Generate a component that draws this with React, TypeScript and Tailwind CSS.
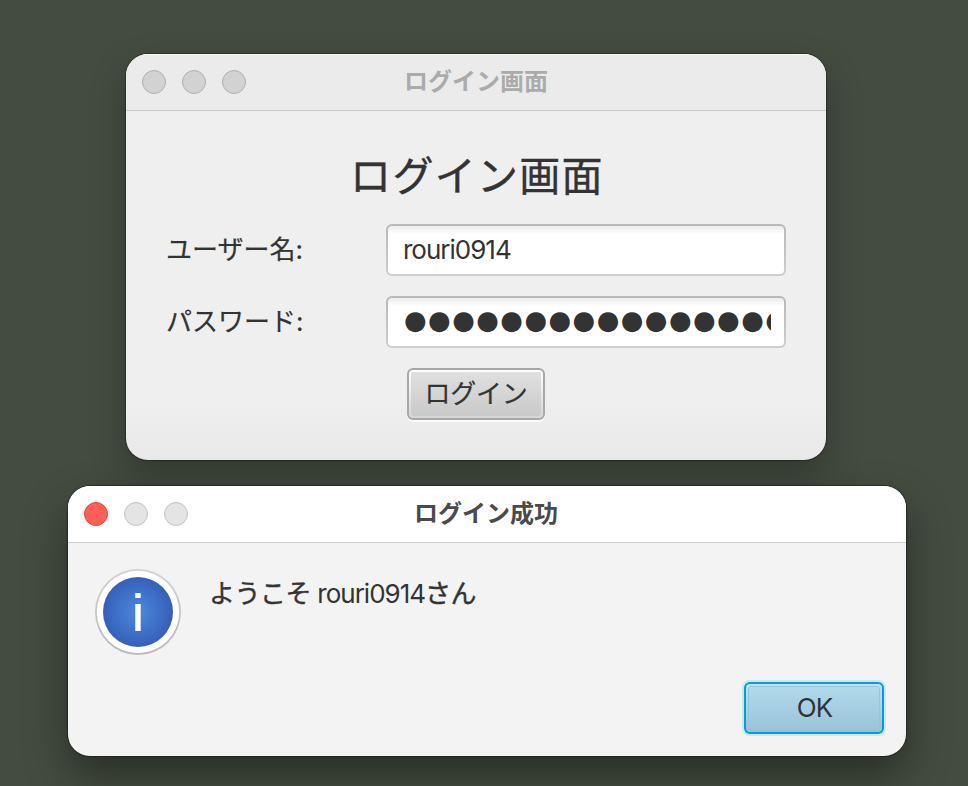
import type { ReactNode } from "react";

const PASSWORD_MASK = "●".repeat(16);

function TrafficLights({ active }: { active: boolean }) {
  const idle = active
    ? "bg-[#e4e4e4] border-[#c2c2c2]"
    : "bg-[#d2d2d2] border-[#b0b0b0]";
  return (
    <div className="flex w-[120px] gap-4 pl-4">
      <span
        className={`size-6 rounded-full border ${active ? "bg-[#ff5f57] border-[#e2463f]" : idle}`}
      />
      <span className={`size-6 rounded-full border ${idle}`} />
      <span className={`size-6 rounded-full border ${idle}`} />
    </div>
  );
}

function TitleBar({ title, active }: { title: string; active: boolean }) {
  return (
    <header
      className={`flex h-[57px] shrink-0 items-center justify-between border-b ${
        active
          ? "border-[#cdcdcd] bg-white pr-[2px] text-[#4a4a4a]"
          : "border-[#c8c8c8] bg-[#ebebeb] text-[#ababab] shadow-[inset_0_1px_0_#f7f7f7]"
      }`}
    >
      <TrafficLights active={active} />
      <h1 className="pb-px text-[24px] leading-8 font-bold">{title}</h1>
      <div className="w-[120px]" />
    </header>
  );
}

function Field({ label, children }: { label: string; children: ReactNode }) {
  return (
    <div className="flex h-[52px] items-center">
      <span className="w-[220px] text-[26px] leading-8 whitespace-nowrap [-webkit-text-stroke:0.2px]">
        {label}
      </span>
      <div className="h-[52px] w-[400px] rounded-[6px] bg-linear-to-b from-[#b8b8b8] to-[#cecece] p-[2px]">
        <div className="flex h-full items-center rounded-[4px] bg-white bg-linear-to-b from-[#ededed] to-white to-[8px] px-[15px]">
          {children}
        </div>
      </div>
    </div>
  );
}

function InfoIcon() {
  return (
    <svg width="86" height="86" viewBox="0 0 86 86" className="shrink-0">
      <defs>
        <radialGradient id="info-fill">
          <stop offset="0" stopColor="#4a8ade" />
          <stop offset="1" stopColor="#365fb9" />
        </radialGradient>
        <linearGradient id="info-ring" x1="0" y1="0" x2="0" y2="1">
          <stop offset="0" stopColor="#d2d2d2" />
          <stop offset="1" stopColor="#b9b9b9" />
        </linearGradient>
      </defs>
      <circle cx="43" cy="43" r="43" fill="url(#info-ring)" />
      <circle cx="43" cy="43" r="41.2" fill="white" />
      <circle cx="43" cy="43" r="35" fill="url(#info-fill)" />
      <path d="M40.3 24h5.4v5h-5.4zM40.3 35h5.4v27h-5.4z" fill="white" />
    </svg>
  );
}

export default function App() {
  return (
    <main className="relative h-[786px] w-[968px] overflow-hidden bg-[#444c40] font-['Inter','Noto_Sans_CJK_JP',sans-serif] text-[#333333]">
      <section className="absolute top-[54px] left-[126px] h-[406px] w-[700px] rounded-[22px] shadow-[0_0_1px_1px_rgba(0,0,0,0.3),0_16px_36px_rgba(0,0,0,0.27)]">
        <div className="flex h-full flex-col overflow-hidden rounded-[22px] bg-[#efefef] bg-linear-to-b from-[#efefef] from-85% to-[#e9e9e9]">
          <TitleBar title="ログイン画面" active={false} />
          <div className="flex flex-col px-10 pt-9">
            <h2 className="mb-[17px] h-[60px] pl-[2px] text-center text-[41px] leading-[59px] font-normal tracking-[1.3px] [-webkit-text-stroke:0.4px]">
              ログイン画面
            </h2>
            <div className="flex flex-col gap-5">
              <Field label="ユーザー名:">
                <span className="text-[26px] leading-8 tracking-[-1px]">rouri0914</span>
              </Field>
              <Field label="パスワード:">
                <span className="ml-px w-[367px] shrink-0 overflow-hidden pb-1 font-['DejaVu_Sans'] text-[26px] leading-10 tracking-[1.4px] whitespace-nowrap">
                  {PASSWORD_MASK}
                </span>
              </Field>
              <button className="h-[52px] w-[138px] self-center rounded-[6px] bg-[#a8a8a8] p-[2px] shadow-[0_2px_0_#fafafa]">
                <span className="block h-full rounded-[4px] bg-linear-to-b from-white to-[#d6d6d6] p-[2px]">
                  <span className="flex h-full items-center justify-center rounded-[3px] bg-linear-to-b from-[#e0e0e0] to-[#c9c9c9] pb-px text-[26px] leading-8 tracking-[-0.2px] [-webkit-text-stroke:0.2px]">
                    ログイン
                  </span>
                </span>
              </button>
            </div>
          </div>
        </div>
      </section>

      <section className="absolute top-[486px] left-[68px] h-[270px] w-[838px] rounded-[22px] shadow-[0_0_1px_1px_rgba(0,0,0,0.35),0_20px_44px_rgba(0,0,0,0.4)]">
        <div className="flex h-full flex-col overflow-hidden rounded-[22px] bg-[#f3f3f3]">
          <TitleBar title="ログイン成功" active={true} />
          <div className="flex grow flex-col justify-between pt-[26px] pr-[22px] pb-[22px] pl-[27px]">
            <div className="flex gap-7">
              <InfoIcon />
              <p className="pt-[9px] text-[26px] leading-8 tracking-[-1px]">
                <span className="tracking-[-0.5px] [-webkit-text-stroke:0.4px]">ようこそ</span>{" "}
                rouri0914
                <span className="tracking-[-0.6px] [-webkit-text-stroke:0.4px]">さん</span>
              </p>
            </div>
            <button className="h-[52px] w-[140px] self-end rounded-[6px] bg-[#039ed3] p-[2px] shadow-[0_0_0_2px_#cde6ef]">
              <span className="block h-full rounded-[4px] bg-linear-to-b from-[#c2e2f0] to-[#8fc3de] p-[2px]">
                <span className="flex h-full items-center justify-center rounded-[3px] border border-[#95c5dc] bg-linear-to-b from-[#b1daec] to-[#9dc3da] pl-px text-[26px] leading-8 tracking-[-1px]">
                  OK
                </span>
              </span>
            </button>
          </div>
        </div>
      </section>
    </main>
  );
}
